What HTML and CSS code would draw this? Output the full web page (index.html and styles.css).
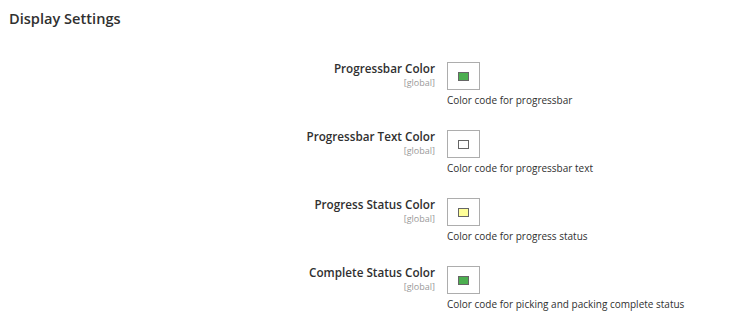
FILE: index.html
```html
<!DOCTYPE html>
<html lang="en">
<head>
  <meta charset="UTF-8" />
  <title>Display Settings</title>
  <link rel="stylesheet" href="styles.css">
</head>
<body>
  <h2 class="section-title">Display Settings</h2>

  <div class="config">
    <div class="row">
      <div class="label">
        <span class="name">Progressbar Color</span>
        <span class="scope">[global]</span>
      </div>
      <div class="value">
        <div class="picker"><span class="swatch" style="background:#4caf50"></span></div>
        <p class="note">Color code for progressbar</p>
      </div>
    </div>

    <div class="row">
      <div class="label">
        <span class="name">Progressbar Text Color</span>
        <span class="scope">[global]</span>
      </div>
      <div class="value">
        <div class="picker"><span class="swatch" style="background:#ffffff"></span></div>
        <p class="note">Color code for progressbar text</p>
      </div>
    </div>

    <div class="row">
      <div class="label">
        <span class="name">Progress Status Color</span>
        <span class="scope">[global]</span>
      </div>
      <div class="value">
        <div class="picker"><span class="swatch" style="background:#ffff99"></span></div>
        <p class="note">Color code for progress status</p>
      </div>
    </div>

    <div class="row">
      <div class="label">
        <span class="name">Complete Status Color</span>
        <span class="scope">[global]</span>
      </div>
      <div class="value">
        <div class="picker"><span class="swatch" style="background:#4caf50"></span></div>
        <p class="note">Color code for picking and packing complete status</p>
      </div>
    </div>
  </div>
</body>
</html>
```

FILE: styles.css
```css
body {
  margin: 0;
  padding: 0;
  font-family: "Open Sans", "Liberation Sans", sans-serif;
  background: #fff;
  color: #303030;
}
.section-title {
  margin: 0;
  padding: 9px 9px 0;
  font-size: 14.6px;
  font-weight: 600;
  line-height: 19px;
  color: #303030;
}
.config {
  padding-top: 32px;
}
.row {
  display: grid;
  grid-template-columns: 435px 1fr;
  column-gap: 12px;
  height: 68px;
}
.label {
  display: flex;
  flex-direction: column;
  align-items: flex-end;
}
.name {
  font-size: 11.7px;
  font-weight: 600;
  line-height: 16px;
}
.scope {
  margin-top: 1px;
  font-size: 9px;
  line-height: 11px;
  color: #999;
}
.value {
  display: flex;
  flex-direction: column;
  align-items: flex-start;
  padding-top: 2px;
}
.picker {
  width: 31px;
  height: 26px;
  border: 1px solid #adadad;
  display: flex;
  align-items: center;
  justify-content: center;
}
.swatch {
  width: 9px;
  height: 7px;
  border: 1px solid #666;
}
.note {
  margin: 3px 0 0;
  font-size: 10px;
  line-height: 14px;
  color: #303030;
}
```
